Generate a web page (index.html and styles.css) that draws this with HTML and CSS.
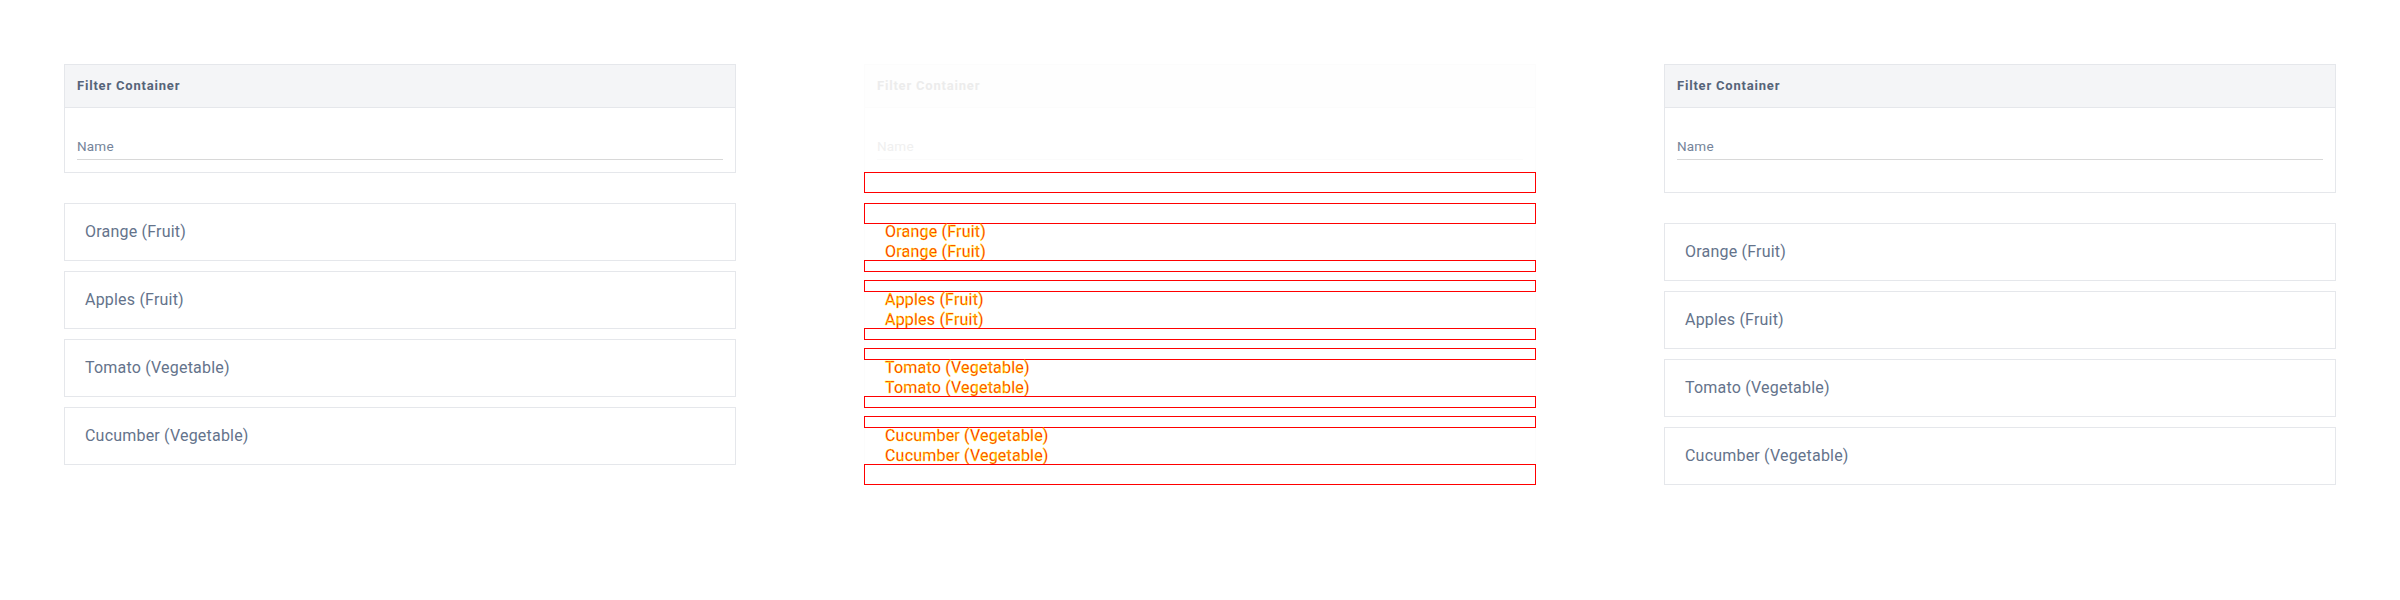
FILE: index.html
```html
<!DOCTYPE html>
<html lang="en">
<head>
<meta charset="utf-8">
<title>Filter Container</title>
<link rel="stylesheet" href="styles.css">
</head>
<body>
<div class="page">
  <section class="column">
    <div class="panel">
      <div class="panel-header">Filter Container</div>
      <div class="panel-body">
        <div class="field"><div class="field-input">Name</div></div>
      </div>
    </div>
    <ul class="list">
      <li class="item">Orange (Fruit)</li>
      <li class="item">Apples (Fruit)</li>
      <li class="item">Tomato (Vegetable)</li>
      <li class="item">Cucumber (Vegetable)</li>
    </ul>
  </section>

  <section class="column diff">
    <div class="panel faded">
      <div class="panel-header">Filter Container</div>
      <div class="panel-body">
        <div class="field"><div class="field-input">Name</div></div>
      </div>
    </div>
    <div class="mark mark-lg"></div>
    <div class="spacer"></div>
    <div class="mark mark-lg"></div>
    <div class="seg seg-text"><div class="dtext">Orange (Fruit)</div><div class="dtext">Orange (Fruit)</div></div>
    <div class="mark"></div>
    <div class="seg seg-gap"></div>
    <div class="mark"></div>
    <div class="seg seg-text"><div class="dtext">Apples (Fruit)</div><div class="dtext">Apples (Fruit)</div></div>
    <div class="mark"></div>
    <div class="seg seg-gap"></div>
    <div class="mark"></div>
    <div class="seg seg-text"><div class="dtext">Tomato (Vegetable)</div><div class="dtext">Tomato (Vegetable)</div></div>
    <div class="mark"></div>
    <div class="seg seg-gap"></div>
    <div class="mark"></div>
    <div class="seg seg-text"><div class="dtext">Cucumber (Vegetable)</div><div class="dtext">Cucumber (Vegetable)</div></div>
    <div class="mark mark-lg"></div>
  </section>

  <section class="column">
    <div class="panel panel-tall">
      <div class="panel-header">Filter Container</div>
      <div class="panel-body">
        <div class="field"><div class="field-input">Name</div></div>
      </div>
    </div>
    <ul class="list">
      <li class="item">Orange (Fruit)</li>
      <li class="item">Apples (Fruit)</li>
      <li class="item">Tomato (Vegetable)</li>
      <li class="item">Cucumber (Vegetable)</li>
    </ul>
  </section>
</div>
</body>
</html>
```

FILE: styles.css
```css
* {
  box-sizing: border-box;
  margin: 0;
  padding: 0;
}

body {
  margin: 0;
  background: #ffffff;
  font-family: Roboto, "Liberation Sans", sans-serif;
}

.page {
  display: grid;
  grid-template-columns: repeat(3, 800px);
}

.column {
  padding: 64px;
  display: flex;
  flex-direction: column;
}

.panel {
  border: 1px solid #e5e7eb;
  background: #ffffff;
}

.panel-header {
  background: #f4f5f7;
  border-bottom: 1px solid #e5e7eb;
  padding: 12px;
  font-size: 13px;
  line-height: 18px;
  font-weight: 700;
  letter-spacing: 0.8px;
  color: #566479;
}

.panel-body {
  padding: 12px;
}

.panel-tall .panel-body {
  padding-bottom: 32px;
}

.field {
  padding-top: 16px;
}

.field-input {
  font-size: 13.5px;
  line-height: 20px;
  letter-spacing: 0.2px;
  color: #75849a;
  padding-bottom: 3px;
  border-bottom: 1px solid #d8d8d8;
}

.list {
  list-style: none;
  margin-top: 30px;
  display: flex;
  flex-direction: column;
  gap: 10px;
}

.item {
  border: 1px solid #e5e7eb;
  padding: 19px 20px;
  font-size: 16px;
  line-height: 18px;
  letter-spacing: 0.2px;
  color: #64738b;
}

/* diff column */
.faded {
  border-color: #fcfcfc;
  border-bottom: 0;
}

.faded .panel-header {
  background: #fefefe;
  border-bottom-color: #fcfcfc;
  color: #ececec;
}

.faded .field-input {
  color: #f0f0f0;
  border-bottom-color: #fbfbfb;
}

.mark {
  height: 12px;
  border: 1px solid #ff0000;
}

.mark-lg {
  height: 21px;
}

.spacer {
  height: 10px;
}

.seg {
  border-left: 1px solid #fcfcfc;
  border-right: 1px solid #fcfcfc;
}

.seg-gap {
  height: 8px;
}

.seg-text {
  height: 36px;
  padding-left: 20px;
  display: flex;
  flex-direction: column;
  gap: 4px;
}

.dtext {
  font-size: 16px;
  line-height: 16px;
  letter-spacing: 0.2px;
  color: #ff0000;
  -webkit-text-stroke: 0.35px #ffff00;
  white-space: nowrap;
}
```
